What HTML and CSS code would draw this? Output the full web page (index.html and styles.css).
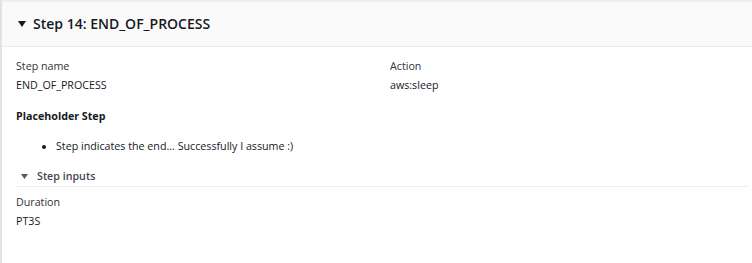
FILE: index.html
```html
<!DOCTYPE html>
<html lang="en">
<head>
  <meta charset="UTF-8">
  <title>Step 14: END_OF_PROCESS</title>
  <link rel="stylesheet" href="styles.css">
</head>
<body>
  <div class="step">
    <!-- Step header -->
    <div class="step-header">
      <svg class="caret" width="8" height="6" viewBox="0 0 8 6"><path d="M0 0H8L4 6Z"/></svg>
      <h2>Step 14: END_OF_PROCESS</h2>
    </div>

    <div class="step-body">
      <div class="details">
        <div class="field">
          <div class="label">Step name</div>
          <div class="value">END_OF_PROCESS</div>
        </div>
        <div class="field">
          <div class="label">Action</div>
          <div class="value">aws:sleep</div>
        </div>
      </div>

      <p class="description">Placeholder Step</p>
      <ul class="notes">
        <li>Step indicates the end... Successfully I assume :)</li>
      </ul>

      <!-- Step inputs -->
      <div class="inputs-header">
        <svg class="caret small" width="7" height="5" viewBox="0 0 7 5"><path d="M0 0H7L3.5 5Z"/></svg>
        <span>Step inputs</span>
      </div>
      <div class="field">
        <div class="label">Duration</div>
        <div class="value">PT3S</div>
      </div>
    </div>
  </div>
</body>
</html>
```

FILE: styles.css
```css
/* General Reset */
body, h2, p, ul {
  margin: 0;
  padding: 0;
}
body {
  font-family: 'Open Sans', sans-serif;
  background-color: #fff;
  color: #16191f;
  font-size: 10.7px;
  line-height: 19px;
}
.step {
  border-left: 2px solid #e2e2e2;
  min-height: 263px;
}
.step-header {
  display: flex;
  align-items: center;
  gap: 7px;
  height: 44px;
  padding-left: 16px;
  background-color: #fafafa;
  border-top: 2px solid #efefef;
  border-bottom: 1px solid #eaeaea;
  box-sizing: content-box;
}
.step-header h2 {
  font-size: 14px;
  font-weight: 600;
  line-height: 20px;
  color: #16191f;
  margin-top: -1px;
}
.caret path {
  fill: #16191f;
}
.caret.small path {
  fill: #545b64;
}
.step-body {
  padding: 10px 4px 0 14px;
}
.details {
  display: grid;
  grid-template-columns: 1fr 1fr;
  column-gap: 16px;
}
.label {
  color: #2f3337;
}
.value {
  color: #16191f;
}
.description {
  font-weight: 700;
  margin-top: 12px;
}
.notes {
  padding-left: 40px;
  margin-top: 11px;
}
.inputs-header {
  display: flex;
  align-items: center;
  gap: 9px;
  margin-top: 11px;
  padding-left: 5px;
  padding-bottom: 0;
  border-bottom: 1px solid #eaeded;
  font-weight: 600;
  color: #414750;
}
.inputs-header + .field {
  margin-top: 6px;
}
```
